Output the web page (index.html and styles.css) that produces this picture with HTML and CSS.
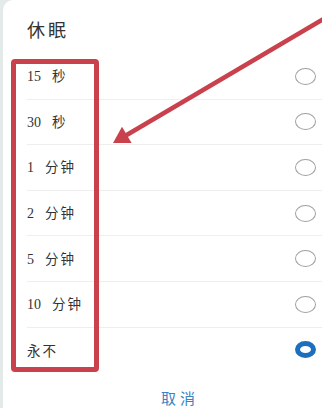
FILE: index.html
```html
<!DOCTYPE html>
<html lang="zh">
<head>
<meta charset="utf-8">
<link rel="stylesheet" href="styles.css">
</head>
<body>
<div class="dialog">
  <div class="title">休眠</div>
  <div class="list">
    <div class="row"><span class="label"><span class="num">15</span><span class="unit">秒</span></span><span class="radio"></span></div>
    <div class="row"><span class="label"><span class="num">30</span><span class="unit">秒</span></span><span class="radio"></span></div>
    <div class="row"><span class="label"><span class="num">1</span><span class="unit">分钟</span></span><span class="radio"></span></div>
    <div class="row"><span class="label"><span class="num">2</span><span class="unit">分钟</span></span><span class="radio"></span></div>
    <div class="row"><span class="label"><span class="num">5</span><span class="unit">分钟</span></span><span class="radio"></span></div>
    <div class="row"><span class="label"><span class="num">10</span><span class="unit">分钟</span></span><span class="radio"></span></div>
    <div class="row"><span class="label"><span class="unit">永不</span></span><span class="radio selected"></span></div>
  </div>
  <div class="cancel">取消</div>
</div>
<div class="highlight"></div>
<svg class="arrow" width="322" height="408" viewBox="0 0 322 408">
  <line x1="345" y1="6.4" x2="125" y2="136" stroke="#c8414c" stroke-width="4.5"/>
  <polygon points="113,143 131.6,143.1 122,126.7" fill="#c8414c"/>
</svg>
</body>
</html>
```
FILE: styles.css
```css
html, body {
  margin: 0;
  padding: 0;
}
body {
  width: 322px;
  height: 408px;
  overflow: hidden;
  background: #e4eaea;
  position: relative;
  font-family: "Liberation Serif", "Noto Sans CJK SC", serif;
  color: #333;
}
.dialog {
  margin-left: 3px;
  height: 408px;
  background: #fff;
  border-top-left-radius: 10px;
}
.title {
  padding: 18px 0 0 24px;
  height: 22px;
  line-height: 22px;
  font-size: 18px;
  letter-spacing: 3px;
  font-family: "Noto Sans CJK SC", sans-serif;
  margin-bottom: 13px;
}
.list {
  margin-left: 24px;
}
.row {
  box-sizing: border-box;
  height: 45.6px;
  display: flex;
  align-items: center;
  justify-content: space-between;
  padding-right: 6px;
  border-top: 1px solid #eeeeee;
}
.row:first-child {
  border-top-color: transparent;
}
.label {
  display: flex;
  align-items: baseline;
  font-size: 14px;
  line-height: 20px;
}
.num {
  font-family: "Liberation Serif", serif;
  margin-right: 11px;
}
.unit {
  font-family: "Noto Sans CJK SC", sans-serif;
  font-size: 13.5px;
  letter-spacing: 2px;
}
.radio {
  box-sizing: border-box;
  width: 21px;
  height: 17px;
  border-radius: 50%;
  border: 1px solid #a0a0a0;
}
.radio.selected {
  border: 5.5px solid #1c6fbf;
}
.cancel {
  padding: 17px 0 0 35px;
  text-align: center;
  line-height: 18px;
  font-size: 15px;
  letter-spacing: 4px;
  color: #3a82c2;
  font-family: "Noto Sans CJK SC", sans-serif;
}
.highlight {
  position: absolute;
  left: 11px;
  top: 59px;
  width: 88px;
  height: 313px;
  box-sizing: border-box;
  border: 5px solid #c8414c;
  border-radius: 4px;
}
.arrow {
  position: absolute;
  left: 0;
  top: 0;
}
```
